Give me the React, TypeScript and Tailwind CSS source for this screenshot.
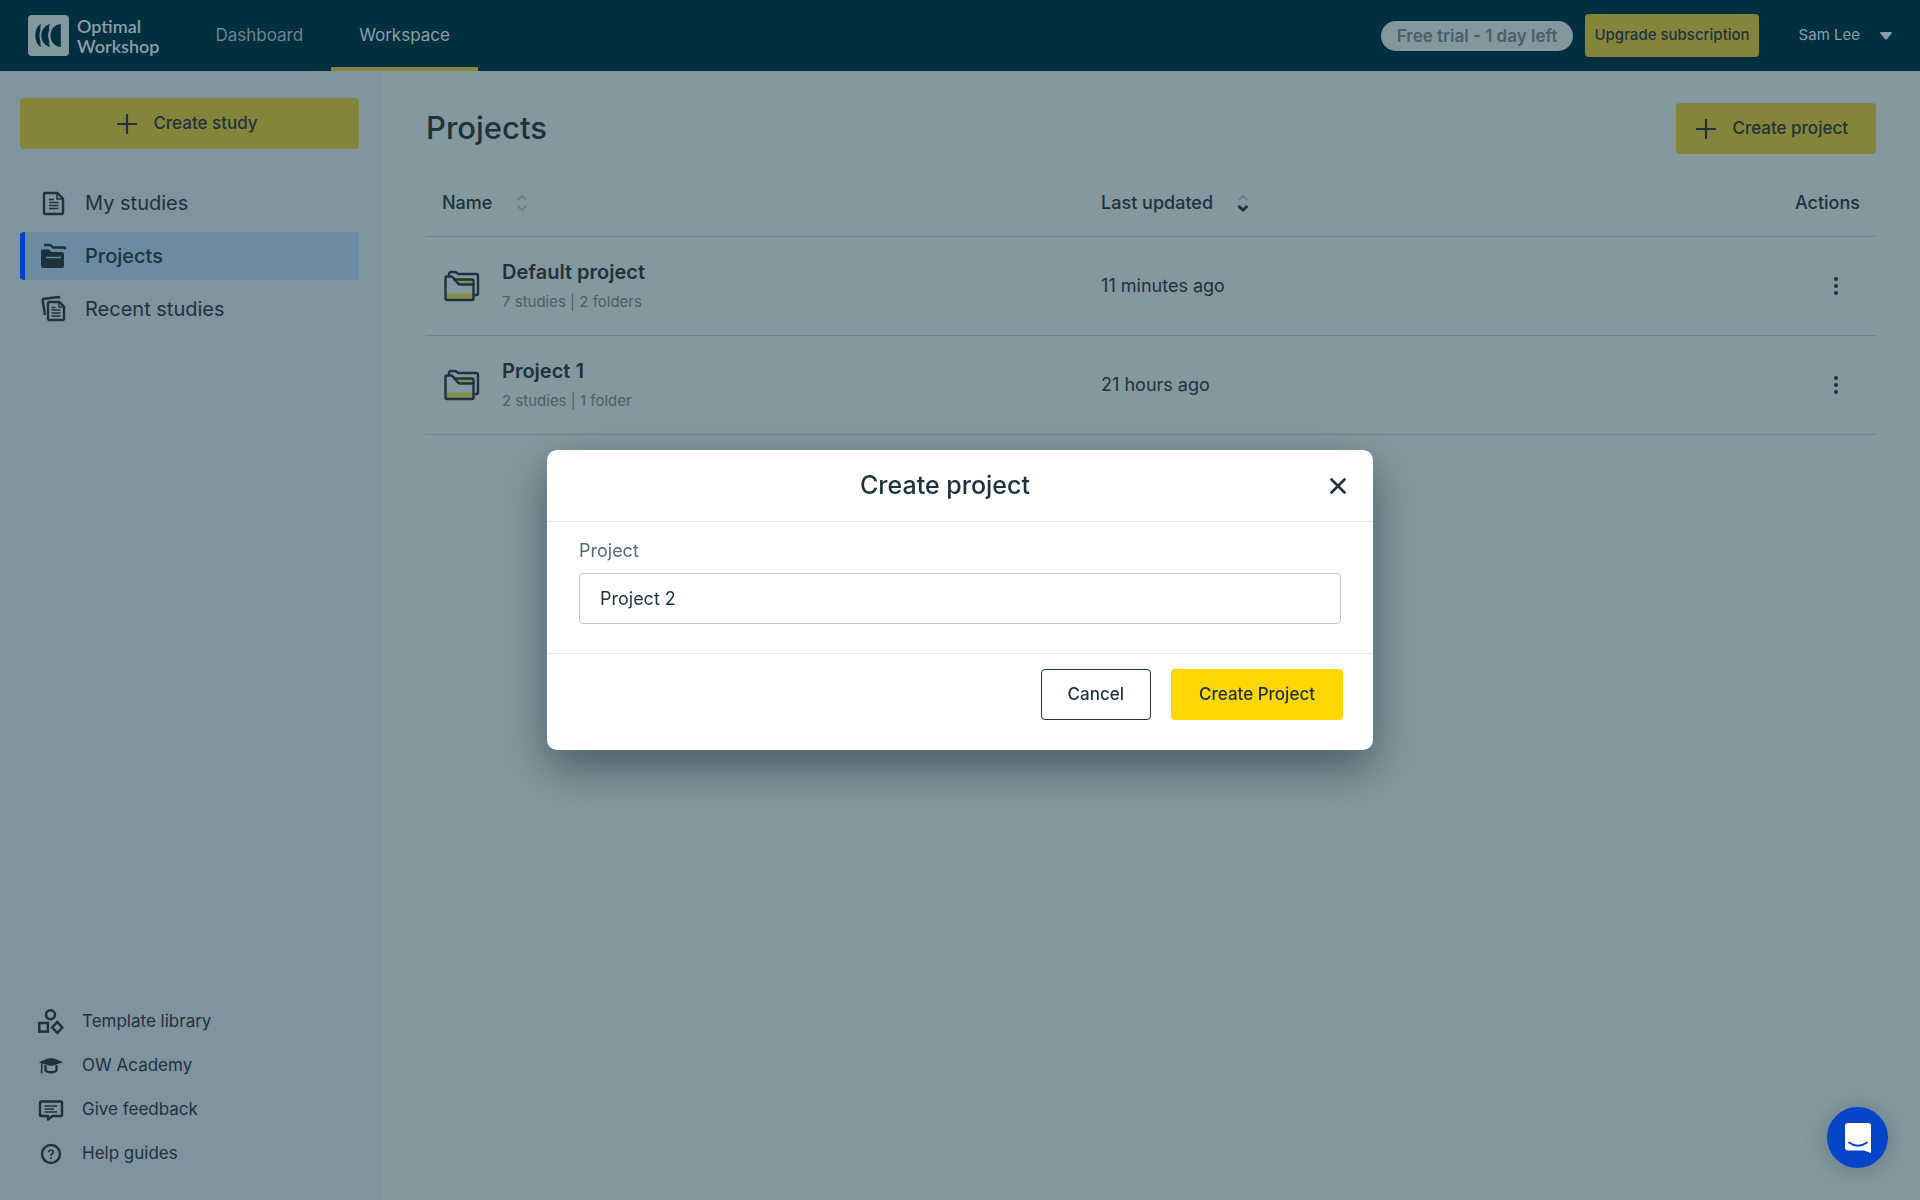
import React, { useState } from "react";

type IconProps = { className?: string };

function LogoMark({ className }: IconProps) {
  return (
    <svg viewBox="0 0 41 41" className={className} aria-hidden="true">
      <rect width="41" height="41" rx="4" fill="#83979f" />
      <g fill="#002f40">
        <path d="M13 9C5.500 12 5.500 29 13 32Q12 29.500 12.500 26.500Q10.500 20.500 12.500 14.500Q12 11.500 13 9Z" />
        <path d="M22 9C10.500 12 10.500 29 22 32Q20.500 29.500 21.200 26Q19 20.500 21.200 15Q20.500 11.500 22 9Z" />
        <path d="M32.800 9C19 10 19 31 32.800 32Z" />
      </g>
    </svg>
  );
}

function PlusIcon({ className }: IconProps) {
  return (
    <svg viewBox="0 0 20 20" className={className} stroke="currentColor" strokeWidth="2.200" strokeLinecap="round" aria-hidden="true">
      <path d="M10 1v18M1 10h18" />
    </svg>
  );
}

function StudyIcon({ className }: IconProps) {
  return (
    <svg viewBox="0 0 28 28" className={className} fill="none" stroke="currentColor" aria-hidden="true">
      <path d="M6 4H18.500L24 9.500V23.500Q24 25 22.500 25H6.500Q5 25 5 23.500V5Q5 4 6 4Z" strokeWidth="2.400" strokeLinejoin="round" />
      <path d="M18 4.500V10H23.500" strokeWidth="1.500" />
      <path d="M10 10.500h5M10 13.500h9.500M10 16.500h9.500M10 19.500h9.500" strokeWidth="1.300" />
    </svg>
  );
}

function ProjectsIcon({ className }: IconProps) {
  return (
    <svg viewBox="0 0 28 28" className={className} fill="none" aria-hidden="true">
      <path d="M5 3H11.500L14 5.500H26V7.500" stroke="currentColor" strokeWidth="2.400" strokeLinejoin="round" />
      <path d="M2 9Q2 7.500 3.500 7.500H10L12.500 10H23Q25 10 25 12V24Q25 26 23 26H4Q2 26 2 24Z" fill="currentColor" />
      <path d="M7 15.500H22" stroke="#6b8ba2" strokeWidth="1.500" />
    </svg>
  );
}

function RecentIcon({ className }: IconProps) {
  return (
    <svg viewBox="0 0 28 28" className={className} fill="none" stroke="currentColor" aria-hidden="true">
      <path d="M20 3.500V2L5 3.800Q3.500 4 3.700 5.500L6 20" strokeWidth="2.400" strokeLinejoin="round" />
      <path d="M10.500 7H20.500L25 11.500V23.500Q25 25 23.500 25H10.500Q9 25 9 23.500V8.500Q9 7 10.500 7Z" strokeWidth="2.400" strokeLinejoin="round" />
      <path d="M20 7.500V12H25" strokeWidth="1.400" />
      <path d="M12.500 12.500h4M12.500 15h9M12.500 18h9M12.500 21h9" strokeWidth="1.300" />
    </svg>
  );
}

function TemplateIcon({ className }: IconProps) {
  return (
    <svg viewBox="0 0 26 26" className={className} fill="none" stroke="currentColor" strokeWidth="2.500" aria-hidden="true">
      <circle cx="12.500" cy="5.800" r="4.500" />
      <rect x="1.300" y="14" width="8.600" height="8.600" />
      <path d="M19.300 13L24.300 18.500L19.300 24L14.200 18.500Z" />
    </svg>
  );
}

function AcademyIcon({ className }: IconProps) {
  return (
    <svg viewBox="0 0 26 26" className={className} fill="none" aria-hidden="true">
      <path d="M.800 9.200L10 5.500Q13 4.800 16 5.500L25.200 9.200L15 12.500Q13 13 11 12.500Z" fill="currentColor" />
      <path d="M4 10L3.500 20.500" stroke="currentColor" strokeWidth="1.600" />
      <path d="M7.500 12V17Q8 19.200 13 19.200Q18 19.200 18.500 17V12" stroke="currentColor" strokeWidth="2.400" />
    </svg>
  );
}

function FeedbackIcon({ className }: IconProps) {
  return (
    <svg viewBox="0 0 26 26" className={className} fill="none" stroke="currentColor" aria-hidden="true">
      <path d="M3 4.500H23Q24 4.500 24 5.500V18Q24 19 23 19H14.500L10 22.500V19H3Q2 19 2 18V5.500Q2 4.500 3 4.500Z" strokeWidth="2.400" strokeLinejoin="round" />
      <path d="M6.500 9H19M6.500 12H16M6.500 15H19" strokeWidth="1.300" />
    </svg>
  );
}

function HelpIcon({ className }: IconProps) {
  return (
    <svg viewBox="0 0 26 26" className={className} fill="none" stroke="currentColor" aria-hidden="true">
      <circle cx="13" cy="13" r="9" strokeWidth="2.400" />
      <path d="M10.800 11.200Q10.800 9 13 9Q15.200 9 15.200 11Q15.200 12.200 13.900 12.900Q13 13.500 13 14.700" strokeWidth="1.700" />
      <circle cx="13" cy="17" r="1" fill="currentColor" stroke="none" />
    </svg>
  );
}

function FolderStackIcon({ className }: IconProps) {
  return (
    <svg viewBox="0 0 36 32" className={className} fill="none" stroke="#1d323d" strokeWidth="2.400" strokeLinejoin="round" aria-hidden="true">
      <path d="M2 23.500H29V29H2Z" fill="#848f50" stroke="none" />
      <path d="M12 10.500H28V13.500H15Z" fill="#848f50" stroke="none" />
      <path d="M5 6V4Q5 2 7 2H10.500Q12 2 13 3L14 4H32.500Q34 4 34 5.500V23.500Q34 25 32.500 25H30.500" />
      <path d="M2.500 6.500H7Q8 6.500 9 7.500L13.500 13Q14.500 14.500 16.500 14.500H29.500V28.500Q29.500 30 28 30H3Q1.500 30 1.500 28.500V7.500Q1.500 6.500 2.500 6.500Z" />
      <path d="M9.500 9.500H28Q29.500 9.500 29.500 11V15" />
    </svg>
  );
}

function SortIcon({ active }: { active?: boolean }) {
  return (
    <svg viewBox="0 0 12 18" className="h-[18px] w-3" fill="none" strokeWidth="2.200" aria-hidden="true">
      <path d="M1.500 6L6 2L10.500 6" stroke="#6d8088" />
      <path d="M1.500 12L6 16L10.500 12" stroke={active ? "#1d323d" : "#6d8088"} strokeWidth={active ? 3 : 2.2} />
    </svg>
  );
}

const studyLinks = [
  { label: "My studies", Icon: StudyIcon, active: false },
  { label: "Projects", Icon: ProjectsIcon, active: true },
  { label: "Recent studies", Icon: RecentIcon, active: false },
];

const resourceLinks = [
  { label: "Template library", Icon: TemplateIcon },
  { label: "OW Academy", Icon: AcademyIcon },
  { label: "Give feedback", Icon: FeedbackIcon },
  { label: "Help guides", Icon: HelpIcon },
];

const projects = [
  { name: "Default project", summary: "7 studies | 2 folders", updated: "11 minutes ago" },
  { name: "Project 1", summary: "2 studies | 1 folder", updated: "21 hours ago" },
];

function Header() {
  return (
    <header className="flex h-[71px] shrink-0 items-center bg-[#002f40] px-7 text-[#8b9fa9]">
      <a href="#" className="flex items-center gap-2">
        <LogoMark className="size-[41px]" />
        <span className="flex flex-col font-[Lato,sans-serif] text-[18px] leading-5 font-semibold">
          <span>Optimal</span>
          <span>Workshop</span>
        </span>
      </a>
      <nav className="ml-7 flex self-stretch text-[17px]">
        <a href="#" className="flex items-center px-7 text-[#70858f]">
          Dashboard
        </a>
        <a href="#" className="flex items-center border-y-4 border-t-transparent border-b-[#84853b] px-7">
          Workspace
        </a>
      </nav>
      <div className="ml-auto flex items-center">
        <span className="rounded-full bg-[#83979f] px-4 py-[3px] text-[17px] leading-6 font-semibold text-[#4a5f68]">
          Free trial - 1 day left
        </span>
        <button type="button" className="ml-3 h-[43px] rounded bg-[#84853b] px-[9px] text-[15px] font-medium text-[#1d323d]">
          Upgrade subscription
        </button>
        <button type="button" className="ml-10 flex items-center gap-5 text-[15px]">
          Sam Lee
          <svg viewBox="0 0 12 8" className="h-2 w-3" fill="currentColor" aria-hidden="true">
            <path d="M1 0H11Q12.500 0 11.500 1.500L7 7Q6 8 5 7L.500 1.500Q-.500 0 1 0Z" />
          </svg>
        </button>
      </div>
    </header>
  );
}

function Sidebar() {
  return (
    <aside className="flex w-[382px] shrink-0 flex-col border-r border-[#7b8f97] bg-[#80949f] px-5 pt-[27px] pr-[22px] pb-6">
      <button type="button" className="flex h-[51px] items-center justify-center gap-4 rounded bg-[#84853b] pr-1 text-[17px] font-medium">
        <PlusIcon className="size-5" />
        Create study
      </button>
      <nav className="mt-[30px] flex flex-col gap-[5px]">
        {studyLinks.map(({ label, Icon, active }) => (
          <a
            key={label}
            href="#"
            className={
              active
                ? "flex h-12 items-center gap-[18px] rounded border-l-5 border-[#0042c3] bg-[#6b8ba2] pl-[14px] text-[20px] font-medium"
                : "flex h-12 items-center gap-[18px] border-l-5 border-transparent pl-[14px] text-[20px]"
            }
          >
            <Icon className="size-7" />
            {label}
          </a>
        ))}
      </nav>
      <nav className="mt-auto flex flex-col">
        {resourceLinks.map(({ label, Icon }) => (
          <a key={label} href="#" className="flex h-11 items-center gap-[18px] pl-[18px] text-[17px]">
            <Icon className="size-[26px]" />
            {label}
          </a>
        ))}
      </nav>
    </aside>
  );
}

function ProjectTable() {
  return (
    <table className="mt-4 w-full table-fixed border-collapse text-left text-[18px]">
      <thead>
        <tr className="h-[66px] border-b border-[#71868f]">
          <th className="w-5/11 px-4 font-medium">
            <button type="button" className="flex items-center gap-6">
              Name
              <SortIcon />
            </button>
          </th>
          <th className="px-4 font-medium">
            <button type="button" className="flex items-center gap-6">
              Last updated
              <SortIcon active />
            </button>
          </th>
          <th className="w-40 px-4 text-right font-medium">Actions</th>
        </tr>
      </thead>
      <tbody>
        {projects.map((project) => (
          <tr key={project.name} className="h-[99px] border-b border-[#71868f]">
            <td className="px-[18px]">
              <div className="flex items-center gap-[22px]">
                <FolderStackIcon className="h-8 w-9 shrink-0" />
                <div>
                  <a href="#" className="block text-[20px] leading-7 font-semibold">
                    {project.name}
                  </a>
                  <p className="mt-1 text-[15px] leading-6 text-[#4a5f68]">{project.summary}</p>
                </div>
              </div>
            </td>
            <td className="px-4">{project.updated}</td>
            <td className="px-4 text-right">
              <button type="button" aria-label={`Actions for ${project.name}`} className="inline-flex w-12 justify-center align-middle">
                <svg viewBox="0 0 6 20" className="h-5 w-[6px]" fill="currentColor" aria-hidden="true">
                  <circle cx="3" cy="2" r="2" />
                  <circle cx="3" cy="9" r="2" />
                  <circle cx="3" cy="16" r="2" />
                </svg>
              </button>
            </td>
          </tr>
        ))}
      </tbody>
    </table>
  );
}

function CreateProjectDialog() {
  const [name, setName] = useState("Project 2");

  return (
    <div className="fixed inset-0 flex items-center justify-center p-4">
      <div
        role="dialog"
        aria-modal="true"
        aria-labelledby="dialog-title"
        className="w-full max-w-[826px] rounded-[10px] bg-white shadow-[0_18px_44px_rgba(16,36,46,0.5)]"
      >
        <div className="flex h-[72px] items-center border-b border-[#e6e9ea] px-5">
          <h2 id="dialog-title" className="flex-1 text-center text-[25px] font-medium">
            Create project
          </h2>
          <button type="button" aria-label="Close" className="flex size-[30px] items-center justify-center">
            <svg viewBox="0 0 16 16" className="size-4" stroke="currentColor" strokeWidth="2.600" strokeLinecap="round" aria-hidden="true">
              <path d="M1.500 1.500L14.500 14.500M14.500 1.500L1.500 14.500" />
            </svg>
          </button>
        </div>
        <div className="border-b border-[#e6e9ea] px-8 pt-[15px] pb-[29px]">
          <label htmlFor="project-name" className="block text-[18px] leading-7 text-[#566870]">
            Project
          </label>
          <input
            id="project-name"
            type="text"
            value={name}
            onChange={(e) => setName(e.target.value)}
            className="mt-2 h-[51px] w-full rounded border border-[#c4c9cb] px-5 text-[18px] outline-none"
          />
        </div>
        <div className="flex justify-end gap-5 px-[30px] pt-[15px] pb-[30px] text-[17px] font-medium">
          <button type="button" className="h-[51px] rounded border border-[#1d323d] px-[26px]">
            Cancel
          </button>
          <button type="button" className="h-[51px] rounded bg-[#ffd703] px-7">
            Create Project
          </button>
        </div>
      </div>
    </div>
  );
}

export default function App() {
  return (
    <div className="flex min-h-screen flex-col bg-[#84989f] font-[Inter,sans-serif] text-[#1d323d]">
      <Header />
      <div className="flex flex-1">
        <Sidebar />
        <main className="min-w-0 flex-1 px-11 pt-8">
          <div className="flex items-center justify-between">
            <h1 className="text-[31px] font-medium">Projects</h1>
            <button type="button" className="flex h-[51px] items-center gap-4 rounded bg-[#84853b] pr-7 pl-5 text-[17px] font-medium">
              <PlusIcon className="size-5" />
              Create project
            </button>
          </div>
          <ProjectTable />
        </main>
      </div>
      <CreateProjectDialog />
      <button
        type="button"
        aria-label="Open messenger"
        className="fixed right-8 bottom-8 flex size-[61px] items-center justify-center rounded-full bg-[#0445c8] shadow-[0_2px_24px_rgba(30,50,60,0.3)]"
      >
        <svg viewBox="0 0 28 32" className="h-8 w-7" aria-hidden="true">
          <path d="M4 1H24Q27 1 27 4V31L20 28.500H4Q1 28.500 1 25.500V4Q1 1 4 1Z" fill="#fff" />
          <path d="M5 20.500Q14 27 23 20.500" fill="none" stroke="#0445c8" strokeWidth="1.800" strokeLinecap="round" />
        </svg>
      </button>
    </div>
  );
}
